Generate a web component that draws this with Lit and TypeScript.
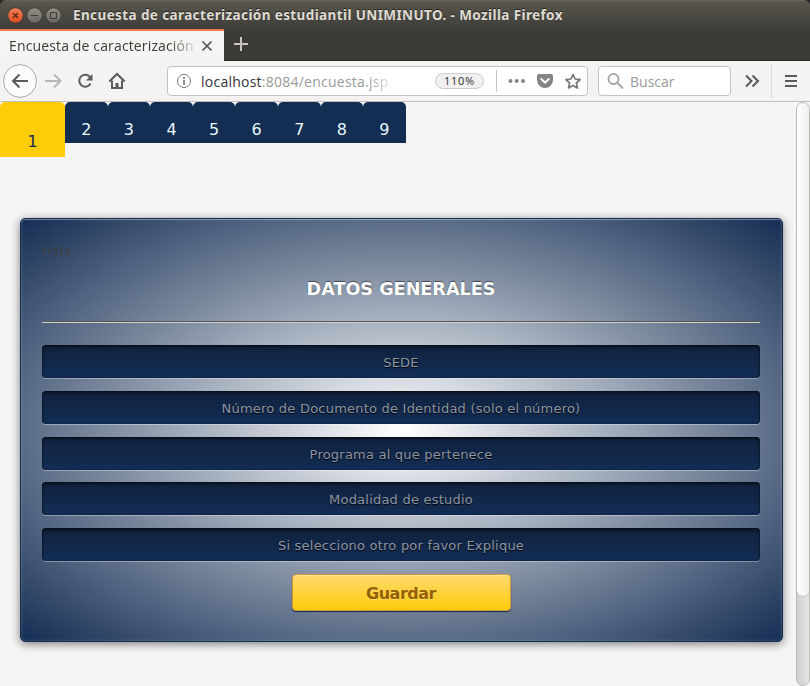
import { LitElement, html, css } from "lit";
import { customElement } from "lit/decorators.js";

@customElement("browser-chrome")
class BrowserChrome extends LitElement {
  static styles = css`
    :host { display: block; font-family: "Open Sans", "Noto Sans", sans-serif; color: #3c3b37; }
    svg { display: block; flex: none; }
    .title { box-sizing: border-box; height: 29px; display: flex; align-items: center; padding-left: 7px; background: linear-gradient(#67645b 0, #59564d 2px, #3f3e39 28px); border-radius: 6px 6px 0 0; }
    .name { margin-left: 11px; font: bold 13.5px/28px "Noto Sans", sans-serif; color: #dfdbd2; text-shadow: 0 -1px #252420; white-space: nowrap; letter-spacing: 0.39px; }
    .tabs { height: 32px; display: flex; background: #3c3b37; box-shadow: inset 0 -1px #292826; }
    .tab { box-sizing: border-box; width: 224px; background: #f5f4f2; border-top: 2px solid #f07746; display: flex; align-items: center; padding-left: 9px; }
    .tabname { width: 190px; white-space: nowrap; font-size: 14px; line-height: 28px; letter-spacing: .14px; -webkit-mask-image: linear-gradient(90deg, #000 160px, transparent 190px); }
    .plus { margin: 7px 0 0 8px; }
    .nav { box-sizing: border-box; height: 41px; display: flex; align-items: center; background: #f4f3f1; border-bottom: 1px solid #c2c0bc; padding-left: 3px; }
    .box { box-sizing: border-box; height: 30px; border: 1px solid #c6c3be; border-radius: 4px; background: #fff; display: flex; align-items: center; }
    .url { width: 421px; margin-left: 39px; padding-left: 8px; }
    .address { width: 226px; margin-left: 9px; font-size: 14px; letter-spacing: .24px; color: #999; white-space: nowrap; }
    .host { color: #333; }
    .fade { background: linear-gradient(90deg, #999, #ddd); -webkit-background-clip: text; color: transparent; }
    .zoom { box-sizing: border-box; width: 49px; height: 16px; margin-left: 8px; border: 1px solid #ccc; border-radius: 8px; background: #f0f0f0; font: 11px/14px "Noto Sans", sans-serif; letter-spacing: .7px; text-align: center; }
    .sep { width: 1px; height: 22px; background: #c8c6c3; margin-left: 12px; }
    .search { width: 133px; margin-left: 10px; padding-left: 8px; font-size: 14px; color: #999; gap: 6px; }
    .line { width: 1px; height: 34px; background: #dddbd8; margin: 0 12px 0 11px; }
  `;
  render() {
    return html`
      <div class="title">
        <svg width="55" height="28" fill="none">
          <defs><linearGradient id="o" x2="0" y2="1"><stop stop-color="#f48459"/><stop offset="1" stop-color="#dc4b1c"/></linearGradient>
          <linearGradient id="g" x2="0" y2="1"><stop stop-color="#949087"/><stop offset="1" stop-color="#68665f"/></linearGradient></defs>
          <g stroke="#393834"><circle cx="8.5" cy="14.5" r="7.8" fill="url(#o)"/><circle cx="27.5" cy="14.5" r="7.8" fill="url(#g)"/><circle cx="46.5" cy="14.5" r="7.8" fill="url(#g)"/></g>
          <path d="M6 12l5 5M11 12l-5 5" stroke="#5c2410" stroke-width="1.3"/>
          <path d="M24 14.5h7M43.5 11.5h6v6h-6z" stroke="#3c3b37"/>
        </svg>
        <span class="name">Encuesta de caracterización estudiantil UNIMINUTO. - Mozilla Firefox</span>
      </div>
      <div class="tabs">
        <div class="tab"><span class="tabname">Encuesta de caracterización</span>
          <svg width="16" height="16" stroke="#555" stroke-width="1.7"><path d="M3.5 3.5l9 9M12.5 3.5l-9 9"/></svg></div>
        <svg class="plus" width="18" height="18" stroke="#cbc5c2" stroke-width="2"><path d="M9 1v14M2 8h14"/></svg>
      </div>
      <div class="nav">
        <svg width="125" height="36" fill="none" stroke="#5b5a58" stroke-width="2">
          <circle cx="17" cy="18" r="16.4" fill="#fcfcfc" stroke="#aaa9a6" stroke-width="1"/>
          <path d="M25 18H10M16.5 11.5L10 18l6.500 6.500"/>
          <path d="M42 18h15M51 11.500L57.500 18 51 24.500" stroke="#b9b8b6"/>
          <path d="M87.300 14.500A6 6 0 1 0 87.600 20.500"/><path d="M89.500 11v6.500H83z" fill="#5b5a58" stroke="none"/>
          <path d="M106.300 18.500L114 11l7.700 7.500"/><path d="M109 17.500V25h10v-7.500" /><path d="M114 25v-5" stroke-width="3"/>
        </svg>
        <div class="box url">
          <svg width="16" height="16" fill="none" stroke="#777"><circle cx="8" cy="8" r="6.500"/><path d="M8 7v5M8 4v2" stroke-width="1.700"/></svg>
          <span class="address"><span class="host">localhost</span>:8084/encuesta.<span class="fade">jsp</span></span>
          <span class="zoom">110%</span><span class="sep"></span>
          <svg width="86" height="28" fill="#858483">
            <circle cx="13.500" cy="14" r="2"/><circle cx="19.700" cy="14" r="2"/><circle cx="26" cy="14" r="2"/>
            <path d="M42 7h12q2 0 2 2v4a8 8 0 0 1-16 0V9q0-2 2-2z"/>
            <path d="M44.200 12l3.800 3.700 3.800-3.700" fill="none" stroke="#fff" stroke-width="2" stroke-linecap="round"/>
            <path d="M76 7.500l2.100 4.500 5 .600-3.700 3.400 1 4.900-4.400-2.500-4.400 2.500 1-4.900-3.700-3.400 5-.600z" fill="none" stroke="#777675" stroke-width="1.700" stroke-linejoin="round"/>
          </svg>
        </div>
        <div class="box search">
          <svg width="17" height="18" fill="none" stroke="#aaa8a6" stroke-width="2"><circle cx="6.500" cy="7" r="5"/><path d="M10 10.500l6 6"/></svg>Buscar
        </div>
        <svg width="29" height="20" fill="none" stroke="#5b5a58" stroke-width="2"><path d="M15 4.500l5.500 5.500-5.500 5.500M21.500 4.500L27 10l-5.500 5.500"/></svg>
        <span class="line"></span>
        <svg width="14" height="14" stroke="#5b5a58" stroke-width="2"><path d="M1 2h12M1 7h12M1 12h12"/></svg>
      </div>`;
  }
}

@customElement("survey-form")
class SurveyForm extends LitElement {
  static styles = css`
    :host { display: block; box-sizing: border-box; width: 763px; height: 424px; padding: 22px 22px 0 21px; border: 1px solid #142d53; border-radius: 5px; text-align: center;
      background: radial-gradient(#fff, #142d53); box-shadow: inset 0 0 3px rgba(255,255,255,.25), inset 0 1px rgba(255,255,255,.3), 0 2px 10px rgba(0,0,0,.5); font-family: "DejaVu Sans", sans-serif; }
    .hello { height: 20px; text-align: left; font-size: 12px; line-height: 20px; letter-spacing: .8px; color: #404040; }
    h1 { margin: 18px 0 0; height: 42px; font-size: 17.6px; line-height: 20px; color: #fff; text-shadow: 0 -1px 1px rgba(0,0,0,.5); border-bottom: 1px solid #555; box-shadow: 0 1px #d2d0c8; margin-bottom: 23px; }
    .field { box-sizing: border-box; height: 33px; margin-bottom: 12.75px; border-radius: 4px; background: linear-gradient(#10213c, #132d56); box-shadow: inset 0 2px 3px rgba(0,0,0,.5), inset 0 0 2px rgba(0,0,0,.5), 0 1px rgba(255,255,255,.35); color: #8c96a4; font-size: 13px; line-height: 35px; letter-spacing: .22px; text-shadow: 0 1px 1px #000; }
    button { display: block; box-sizing: border-box; width: 219px; height: 37px; margin: 0 auto; padding: 0; border: 1px solid #d5952f; border-radius: 4px; background: linear-gradient(#ffd970, #ffcc08); box-shadow: inset 0 1px rgba(255,235,170,.7), 0 1px 1px #142d53; color: #965f0a; font: bold 16px/37px "DejaVu Sans", sans-serif; letter-spacing: -.5px; text-shadow: 0 1px rgba(255,255,255,.25); }
  `;
  render() {
    const fields = ["SEDE", "Número de Documento de Identidad (solo el número)", "Programa al que pertenece", "Modalidad de estudio", "Si selecciono otro por favor Explique"];
    return html`<div class="hello">Hola</div><h1>DATOS GENERALES</h1>
      ${fields.map((f) => html`<div class="field">${f}</div>`)}
      <button>Guardar</button>`;
  }
}

@customElement("app-root")
class AppRoot extends LitElement {
  static styles = css`
    :host { display: flex; flex-direction: column; height: 686px; overflow: hidden; background: #2b2a28; }
    .view { flex: 1; display: flex; min-height: 0; background: #f5f5f5; }
    .page { width: 796px; }
    .steps { display: flex; align-items: flex-start; height: 116px; font: 16px/56px "DejaVu Sans", sans-serif; text-align: center; }
    .step { width: 42.6px; height: 41px; background: #142d53; color: #e4f8f8; border-radius: 5px 5px 0 0; }
    .step.on { width: 65px; height: 55px; line-height: 79px; background: #ffcc08; color: #142d53; }
    survey-form { margin-left: 20px; }
    .track { box-sizing: border-box; width: 14px; border: 1px solid #bcbbb8; border-radius: 7px; background: linear-gradient(90deg, #cfcfcf, #e4e4e4); }
    .thumb { height: 493px; border-radius: 7px; background: linear-gradient(90deg, #fff, #f0efed); box-shadow: 0 1px #c4c3c0; }
  `;
  render() {
    return html`<browser-chrome></browser-chrome>
      <div class="view">
        <div class="page">
          <div class="steps">${[1, 2, 3, 4, 5, 6, 7, 8, 9].map((n) => html`<div class="step ${n === 1 ? "on" : ""}">${n}</div>`)}</div>
          <survey-form></survey-form>
        </div>
        <div class="track"><div class="thumb"></div></div>
      </div>`;
  }
}
